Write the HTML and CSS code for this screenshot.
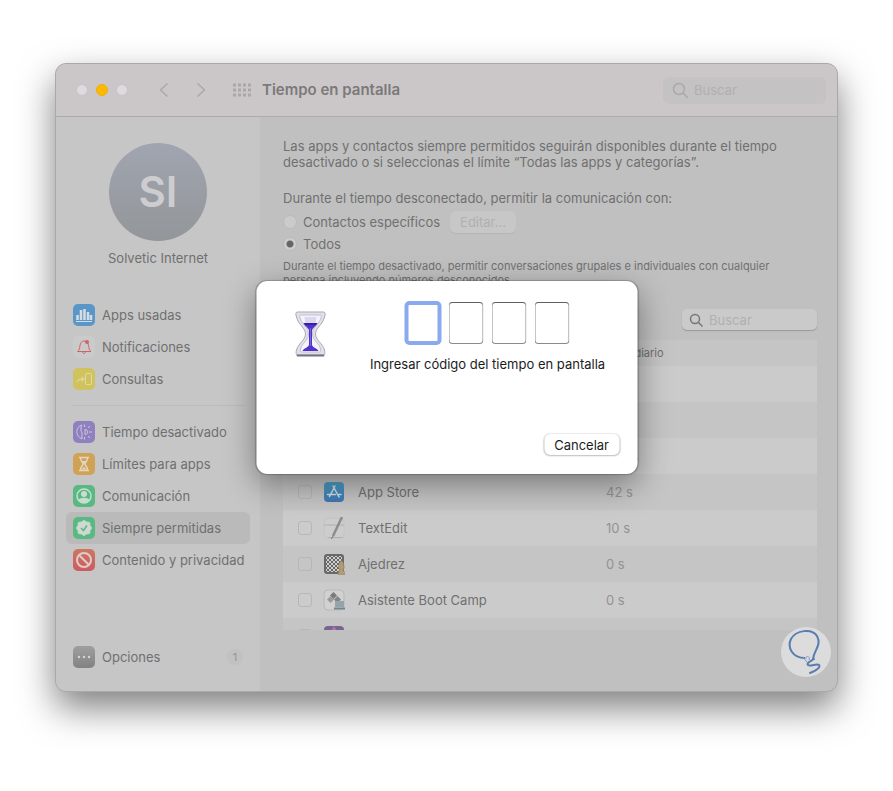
FILE: index.html
```html
<!doctype html>
<html lang="es">
  <head>
    <meta charset="UTF-8" />
    <meta name="viewport" content="width=device-width, initial-scale=1.0" />
    <title>Tiempo en pantalla</title>
    <link rel="stylesheet" href="styles.css">
  </head>
  <body>
    <div class="window">
      <!-- Barra de título -->
      <header class="titlebar">
        <div class="lights">
          <span class="light"></span>
          <span class="light light-min"></span>
          <span class="light"></span>
        </div>
        <div class="nav">
          <button class="nav-btn" aria-label="Atrás">
            <svg width="10" height="16" viewBox="0 0 10 16"><path d="M8.500 1.500L1.500 8l7 6.500" /></svg>
          </button>
          <button class="nav-btn" aria-label="Adelante">
            <svg width="10" height="16" viewBox="0 0 10 16"><path d="M1.500 1.500L8.500 8l-7 6.500" /></svg>
          </button>
        </div>
        <button class="grid-btn" aria-label="Mostrar todo">
          <svg width="18" height="14" viewBox="0 0 18 14">
            <path d="M0 2h18M0 7h18M0 12h18" stroke="#aaa7a8" stroke-width="3" stroke-dasharray="3 2" />
          </svg>
        </button>
        <h1>Tiempo en pantalla</h1>
        <label class="search search-top">
          <svg width="17" height="17" viewBox="0 0 17 17"><circle cx="7" cy="7" r="5.500" /><path d="M11 11l5 5" /></svg>
          <input type="text" placeholder="Buscar" aria-label="Buscar" />
        </label>
      </header>

      <div class="content">
        <!-- Barra lateral -->
        <aside class="sidebar">
          <div class="user">
            <div class="avatar">SI</div>
            <p>Solvetic Internet</p>
          </div>
          <nav class="menu">
            <a href="#" class="item">
              <svg class="icon" viewBox="0 0 22 22"><rect width="22" height="22" rx="5" fill="#5b96c8" /><path d="M3 17.500h16" stroke="#d5dce3" /><path d="M4.500 16v-5M8 16V6M11.500 16V5M15 16V8M18 16v-5" stroke="#d5dce3" stroke-width="2.500" /></svg>
              Apps usadas
            </a>
            <a href="#" class="item">
              <svg class="icon" viewBox="0 0 22 22"><rect width="22" height="22" rx="5" fill="#cbcaca" /><path d="M4.500 15.500c2-1.500 2-3 2.500-6 .5-3 2-4.500 4-4.500 3 0 4 2 4.500 4.500.5 3 .5 4.500 2.500 6zM9.500 16c.5 2 2.500 2 3 0" fill="none" stroke="#cd6565" /><circle cx="14" cy="6" r="2" fill="#cd6565" /></svg>
              Notificaciones
            </a>
            <a href="#" class="item">
              <svg class="icon" viewBox="0 0 22 22"><rect width="22" height="22" rx="5" fill="#d0c25c" /><path d="M3.500 15c0-3 2-4.500 5-4.500V8l3.500 3-3.500 3v-2c-2 0-3.500 1-5 3z" fill="#e0d78f" /><rect x="12.500" y="5.500" width="6" height="11" rx="1" fill="none" stroke="#e0dba8" /></svg>
              Consultas
            </a>
            <hr />
            <a href="#" class="item">
              <svg class="icon" viewBox="0 0 22 22"><rect width="22" height="22" rx="5" fill="#8f80bf" /><g fill="none" stroke="#ccc5dd"><path d="M9 4C2 6 2 15 9 18M9 4c-1.500 2-1.500 6 0 8v6M12 8.500c3.500 0 3.500 5 0 5z" /><path d="M11.500 3.500v2.500M15 7l2-2M16 11h3M15 15l2 2M11.500 16v2.500" /></g></svg>
              Tiempo desactivado
            </a>
            <a href="#" class="item">
              <svg class="icon" viewBox="0 0 22 22"><rect width="22" height="22" rx="5" fill="#cfa256" /><path d="M6 4.500h10M6 17.500h10M7.500 5c0 4 2.500 4 2.500 6s-2.500 2-2.500 6M14.500 5c0 4-2.500 4-2.500 6s2.500 2 2.500 6" fill="none" stroke="#e3d7bd" stroke-width="1.500" /><path d="M8.500 8h5L11 11.500zM8.500 16.500L11 14l2.500 2.500z" fill="#e3d7bd" /></svg>
              Límites para apps
            </a>
            <a href="#" class="item">
              <svg class="icon" viewBox="0 0 22 22"><rect width="22" height="22" rx="5" fill="#58b981" /><circle cx="11" cy="11" r="7" fill="none" stroke="#cbdcd2" stroke-width="1.500" /><circle cx="11" cy="9" r="3" fill="#cbdcd2" /><path d="M5.500 15c2-3 9-3 11 0-3 4-8 4-11 0z" fill="#cbdcd2" /></svg>
              Comunicación
            </a>
            <a href="#" class="item item-active">
              <svg class="icon" viewBox="0 0 22 22"><rect width="22" height="22" rx="5" fill="#58b981" /><path d="M11 3.500l2.500 1.500 3 .5.5 3 1.500 2.500-1.500 2.500-.5 3-3 .5-2.500 1.500-2.500-1.500-3-.5-.5-3L3.500 11 5 8.500l.5-3 3-.5z" fill="#d0d8d3" stroke="#d0d8d3" stroke-linejoin="round" /><path d="M8 11l2.500 2.500L14 8.500" fill="none" stroke="#58b981" stroke-width="1.500" /></svg>
              Siempre permitidas
            </a>
            <a href="#" class="item">
              <svg class="icon" viewBox="0 0 22 22"><defs><linearGradient id="stop" x2="0" y2="1"><stop stop-color="#cb7860" /><stop offset="1" stop-color="#cc5a64" /></linearGradient></defs><rect width="22" height="22" rx="5" fill="url(#stop)" /><circle cx="11" cy="11" r="7" fill="none" stroke="#e0cbc9" stroke-width="2" /><path d="M6 6l10 10" stroke="#e0cbc9" stroke-width="2" /></svg>
              Contenido y privacidad
            </a>
          </nav>
          <a href="#" class="item options">
            <svg class="icon" viewBox="0 0 22 22"><defs><linearGradient id="dots" x2="0" y2="1"><stop stop-color="#9f9f9f" /><stop offset="1" stop-color="#828282" /></linearGradient></defs><rect width="22" height="22" rx="5" fill="url(#dots)" /><g fill="#d5d5d5"><circle cx="6" cy="11" r="1.200" /><circle cx="11" cy="11" r="1.200" /><circle cx="16" cy="11" r="1.200" /></g></svg>
            Opciones
            <span class="count">1</span>
          </a>
        </aside>

        <!-- Panel principal -->
        <main class="main">
          <p class="intro">Las apps y contactos siempre permitidos seguirán disponibles durante el tiempo desactivado o si seleccionas el límite “Todas las apps y categorías”.</p>
          <p class="question">Durante el tiempo desconectado, permitir la comunicación con:</p>
          <div class="option">
            <input type="radio" name="contactos" id="especificos" />
            <label for="especificos">Contactos específicos</label>
            <button class="edit" disabled>Editar...</button>
          </div>
          <div class="option">
            <input type="radio" name="contactos" id="todos" checked />
            <label for="todos">Todos</label>
          </div>
          <p class="note">Durante el tiempo desactivado, permitir conversaciones grupales e individuales con cualquier persona incluyendo números desconocidos.</p>

          <label class="search search-apps">
            <svg width="14" height="14" viewBox="0 0 14 14"><circle cx="6" cy="6" r="4.500" /><path d="M9.500 9.500l4 4" /></svg>
            <input type="text" placeholder="Buscar" aria-label="Buscar apps" />
          </label>

          <div class="table-wrap">
            <table>
              <thead>
                <tr>
                  <th class="col-check"></th>
                  <th class="col-app"></th>
                  <th>Total diario</th>
                </tr>
              </thead>
              <tbody>
                <tr><td></td><td></td><td>120 s</td></tr>
                <tr><td></td><td></td><td>112 s</td></tr>
                <tr><td></td><td></td><td>104 s</td></tr>
                <tr>
                  <td><input type="checkbox" id="appstore" /></td>
                  <td><label class="app" for="appstore">
                    <svg class="icon" viewBox="0 0 22 22"><defs><linearGradient id="store" x2="0" y2="1"><stop stop-color="#4ba3c8" /><stop offset="1" stop-color="#3f76b5" /></linearGradient></defs><rect x="1" y="1" width="20" height="20" rx="4" fill="url(#store)" /><path d="M12 5L6.500 15.500M10 5l6 11M4.500 13.500h8M15 13.500h3" fill="none" stroke="#d5e0e8" stroke-width="1.500" stroke-linecap="round" /></svg>
                    App Store</label></td>
                  <td>42 s</td>
                </tr>
                <tr>
                  <td><input type="checkbox" id="textedit" /></td>
                  <td><label class="app" for="textedit">
                    <svg class="icon" viewBox="0 0 22 22"><rect x="1" y="1" width="20" height="20" rx="4" fill="#cdcdcd" stroke="#c4c4c4" /><path d="M1 8h20M5 20.500h15" stroke="#b0b0b0" /><path d="M10 19L19 0" stroke="#8c8c8c" stroke-width="2.500" /><path d="M8.500 22l1.500-3" stroke="#777" /></svg>
                    TextEdit</label></td>
                  <td>10 s</td>
                </tr>
                <tr>
                  <td><input type="checkbox" id="ajedrez" /></td>
                  <td><label class="app" for="ajedrez">
                    <svg class="icon" viewBox="0 0 22 22"><defs><pattern id="chess" width="4" height="4" patternUnits="userSpaceOnUse"><rect width="4" height="4" fill="#d0d0d0" /><path d="M0 0h2v2H0zM2 2h2v2H2z" fill="#666" /></pattern></defs><rect x="1" y="1" width="20" height="20" rx="3" fill="#6a6968" /><rect x="3" y="3" width="16" height="16" fill="url(#chess)" /><path d="M15 21.500h7.500c0-2.500-2.500-3-2-5.500 1-1.500 1-2.500 0-4 1-4-4-5-4-1-1 2-2 3-.5 4 1 2-1 4-1 6.500z" fill="#b09c72" stroke="#8c7c58" stroke-width=".5" /></svg>
                    Ajedrez</label></td>
                  <td>0 s</td>
                </tr>
                <tr>
                  <td><input type="checkbox" id="bootcamp" /></td>
                  <td><label class="app" for="bootcamp">
                    <svg class="icon" viewBox="0 0 22 22"><rect x="1" y="1" width="20" height="20" rx="4" fill="#d1d1d1" stroke="#b8b8b8" /><path d="M10.500 3l3.500 3.500-3.500 3.500L7 6.500z" fill="#7b7b7b" /><path d="M7.500 7l3.500 3.500L7.500 14 4 10.500z" fill="#9c9c9c" /><path d="M14.500 7l3.500 3.500-3.500 3.500-3.500-3.500z" fill="#858585" /><path d="M12 12h9v6h-9z" fill="#93a5ac" /><path d="M11 19.500h11" stroke="#72848c" stroke-width="2" /></svg>
                    Asistente Boot Camp</label></td>
                  <td>0 s</td>
                </tr>
                <tr>
                  <td><input type="checkbox" aria-label="App" /></td>
                  <td><svg class="icon" viewBox="0 0 22 22"><rect x="1" y="1" width="20" height="20" rx="4" fill="#77658f" /><path d="M11 1l3 5H8z" fill="#b573b5" /></svg></td>
                  <td></td>
                </tr>
              </tbody>
            </table>
          </div>
        </main>
      </div>

      <!-- Diálogo del código -->
      <div class="dialog" role="dialog" aria-labelledby="codigo">
        <div class="dialog-body">
          <svg class="hourglass" width="34" height="50" viewBox="0 0 34 50">
            <path d="M4 3h26c2 0 2 2 1 5-2 8-9 11-9 17s7 9 9 16c1 4 0 5-2 5H5c-2 0-3-1-2-5 2-7 9-10 9-16S5 16 3 8C2 5 2 3 4 3z" fill="#e2e0ea" stroke="#aaa7b3" />
            <path d="M7 6h20c1 0 1 1 .5 3C25 16 19 18 19 25s7 9 8 15c.5 2 0 3-1 3H8c-1 0-1.500-1-1-3 1-6 8-8 8-15S9 16 6.500 9C6 7 6 6 7 6z" fill="#f4f2fb" stroke="#c3c0ce" />
            <path d="M11 8h12l-1 6H12z" fill="#dcd6f0" />
            <path d="M10 14h14c-1 3-4 4-5.500 7v15c1 3 5 3 6.500 6H9c1.500-3 5-3 6.500-6V21C14 18 11 17 10 14z" fill="#5133cc" />
            <path d="M10 14h14l-2 2H12z" fill="#3820a0" />
            <path d="M17 19v18" stroke="#7a64dc" />
            <path d="M4 46.500h26" stroke="#77747f" stroke-width="2" stroke-linecap="round" />
          </svg>
          <div class="code">
            <div class="digits">
              <input type="text" class="digit digit-focus" maxlength="1" aria-label="Dígito 1" />
              <input type="text" class="digit" maxlength="1" aria-label="Dígito 2" />
              <input type="text" class="digit" maxlength="1" aria-label="Dígito 3" />
              <input type="text" class="digit" maxlength="1" aria-label="Dígito 4" />
            </div>
            <p id="codigo">Ingresar código del tiempo en pantalla</p>
          </div>
        </div>
        <button class="cancel">Cancelar</button>
      </div>

      <div class="badge">
        <svg width="50" height="50" viewBox="0 0 50 50">
          <path d="M24 31C11 31 6 20 10 12 15 3 31 1 36 9c5 9-3 14-4 23" fill="none" stroke="#587db0" stroke-width="2" />
          <path d="M22 30l4 5M25 32c-1-4 5-3 3 1" fill="none" stroke="#7d9ac0" />
          <path d="M33 32c-3 2-8 4-6 6s9-2 11 0-3 6-9 8" fill="none" stroke="#587db0" stroke-width="2" stroke-linecap="round" />
        </svg>
      </div>
    </div>
  </body>
</html>
```
FILE: styles.css
```css
* {
  box-sizing: border-box;
}
body {
  margin: 0;
  padding: 63px 55px 99px;
  background-color: #fff;
  font-family: Inter, "Liberation Sans", sans-serif;
  font-size: 13px;
  line-height: 16px;
  color: #707070;
}
p,
h1 {
  margin: 0;
}
button,
input {
  font: inherit;
  color: inherit;
  margin: 0;
}
svg {
  display: block;
  flex: none;
}
.window {
  position: relative;
  border: 1px solid #a9a9a9;
  border-radius: 11px;
  background-color: #c0c0c0;
  box-shadow: 0 16px 36px rgba(0, 0, 0, 0.5);
}

/* Barra de título */
.titlebar {
  display: flex;
  align-items: center;
  height: 53px;
  padding: 0 11px 0 20px;
  background-color: #cbc7c8;
  border-bottom: 1px solid #adabac;
  border-radius: 10px 10px 0 0;
}
.lights {
  display: flex;
  gap: 8px;
}
.light {
  width: 12px;
  height: 12px;
  border-radius: 50%;
  background-color: #dedae0;
  border: 1px solid #c6c2c7;
}
.light-min {
  background-color: #fdb900;
  border-color: #eeb010;
}
.nav {
  display: flex;
  gap: 27px;
  margin: 0 27px 0 31px;
}
.nav-btn,
.grid-btn {
  padding: 0;
  border: none;
  background: none;
}
.nav-btn path {
  fill: none;
  stroke: #aba8a9;
  stroke-width: 1.5px;
}
.titlebar h1 {
  margin-left: 11px;
  font-size: 15px;
  font-weight: 600;
  line-height: 20px;
  color: #7b797a;
}
.search {
  display: flex;
  align-items: center;
}
.search svg {
  fill: none;
  stroke: #aaa;
  stroke-width: 1.5px;
}
.search input {
  flex: 1;
  min-width: 0;
  padding: 0;
  border: none;
  outline: none;
  background: none;
}
.search input::placeholder {
  color: #b0b0b0;
}
.search-top {
  width: 163px;
  height: 27px;
  margin-left: auto;
  padding: 0 9px;
  gap: 5px;
  border-radius: 6px;
  background-color: #c4c2c3;
}

.content {
  display: flex;
}

/* Barra lateral */
.sidebar {
  display: flex;
  flex-direction: column;
  flex: none;
  width: 204px;
  padding: 26px 10px 18px;
  background-color: #c6c6c6;
  border-radius: 0 0 0 10px;
}
.user {
  display: flex;
  flex-direction: column;
  align-items: center;
  gap: 9px;
  margin-bottom: 33px;
}
.avatar {
  display: flex;
  align-items: center;
  justify-content: center;
  width: 98px;
  height: 98px;
  border-radius: 50%;
  background: linear-gradient(#a0a5b0, #939699);
  color: #cdcdd0;
  font-size: 42px;
  font-weight: 600;
}
.item {
  display: flex;
  align-items: center;
  gap: 7px;
  height: 32px;
  padding: 0 7px;
  border-radius: 6px;
  color: inherit;
  text-decoration: none;
  white-space: nowrap;
}
.item-active {
  background-color: #bababa;
}
.menu hr {
  height: 1px;
  margin: 10px 5px;
  border: none;
  background-color: #bcbcbc;
}
.icon {
  width: 22px;
  height: 22px;
}
.options {
  margin-top: auto;
}
.count {
  min-width: 16px;
  margin-left: auto;
  border-radius: 8px;
  background-color: #c1c1c1;
  color: #959595;
  font-size: 11px;
  text-align: center;
}

/* Panel principal */
.main {
  flex: 1;
  min-width: 0;
  padding: 21px 20px 61px 23px;
}
.intro {
  max-width: 510px;
  margin-bottom: 20px;
}
.question {
  margin-bottom: 5px;
}
.option {
  display: flex;
  align-items: center;
  height: 22px;
}
.option input {
  appearance: none;
  width: 14px;
  height: 14px;
  margin-right: 6px;
  border-radius: 50%;
  background-color: #cbcbcb;
  border: 1px solid #bbb;
}
.option input:checked {
  background: radial-gradient(circle, #666 0 3px, #cecece 4px);
}
.edit {
  height: 22px;
  margin-left: 10px;
  padding: 0 10px;
  border: none;
  border-radius: 6px;
  background-color: #c7c7c7;
  box-shadow: 0 1px 1px #b5b5b5;
  color: #b0b0b0;
}
.note {
  max-width: 510px;
  margin: 4px 0 22px;
  font-size: 11px;
  line-height: 14px;
}
.search-apps {
  width: 135px;
  height: 21px;
  margin: 0 0 10px auto;
  padding: 0 7px;
  gap: 6px;
  border-radius: 5px;
  background-color: #cacaca;
  box-shadow: 0 1px 1px #999;
}
.search-apps svg {
  stroke: #777;
}
.table-wrap {
  height: 290px;
  overflow: hidden;
}
table {
  width: 100%;
  border-collapse: collapse;
  table-layout: fixed;
  background-color: #c5c5c5;
}
th {
  height: 26px;
  padding: 0;
  font-size: 11px;
  font-weight: 400;
  text-align: left;
}
.col-check {
  width: 40px;
}
.col-app {
  width: 283px;
}
td {
  height: 36px;
  padding: 0;
}
td:first-child {
  padding-left: 15px;
}
td:last-child {
  color: #939393;
}
tbody tr:nth-child(odd) {
  background-color: #cbcbcb;
}
td input {
  display: block;
  appearance: none;
  width: 14px;
  height: 14px;
  border: 1px solid #b7b7b7;
  border-radius: 3px;
}
.app {
  display: flex;
  align-items: center;
  gap: 13px;
}

/* Diálogo */
.dialog {
  position: absolute;
  top: 217px;
  left: 50%;
  width: 381px;
  padding: 20px 18px 19px 19px;
  transform: translateX(-50%);
  border-radius: 11px;
  background-color: #fff;
  box-shadow: 0 0 1px 1px rgba(0, 0, 0, 0.2), 0 10px 32px rgba(0, 0, 0, 0.4);
  color: #1c1c1c;
}
.dialog-body {
  display: flex;
  gap: 29px;
  padding-left: 18px;
}
.hourglass {
  margin-top: 8px;
}
.code {
  flex: 1;
  text-align: center;
}
.digits {
  display: flex;
  justify-content: center;
  gap: 8px;
  margin: 1px 0 12px;
}
.digit {
  width: 35px;
  height: 42px;
  padding: 0;
  border: 1px solid #8b8b8b;
  border-top-color: #606060;
  border-radius: 4px;
  outline: none;
  text-align: center;
}
.digit-focus {
  border: 3px solid #8aa9ee;
  box-shadow: 0 0 0 1px #8aa9ee;
}
.cancel {
  display: block;
  height: 21px;
  margin: 62px 0 0 auto;
  padding: 0 10px;
  border: none;
  border-radius: 6px;
  background-color: #fff;
  box-shadow: 0 0 1px 1px rgba(0, 0, 0, 0.08), 0 1px 2px rgba(0, 0, 0, 0.2);
}

.badge {
  position: absolute;
  right: 6px;
  bottom: 14px;
  border-radius: 50%;
  background-color: #dcdcdc;
}
```
